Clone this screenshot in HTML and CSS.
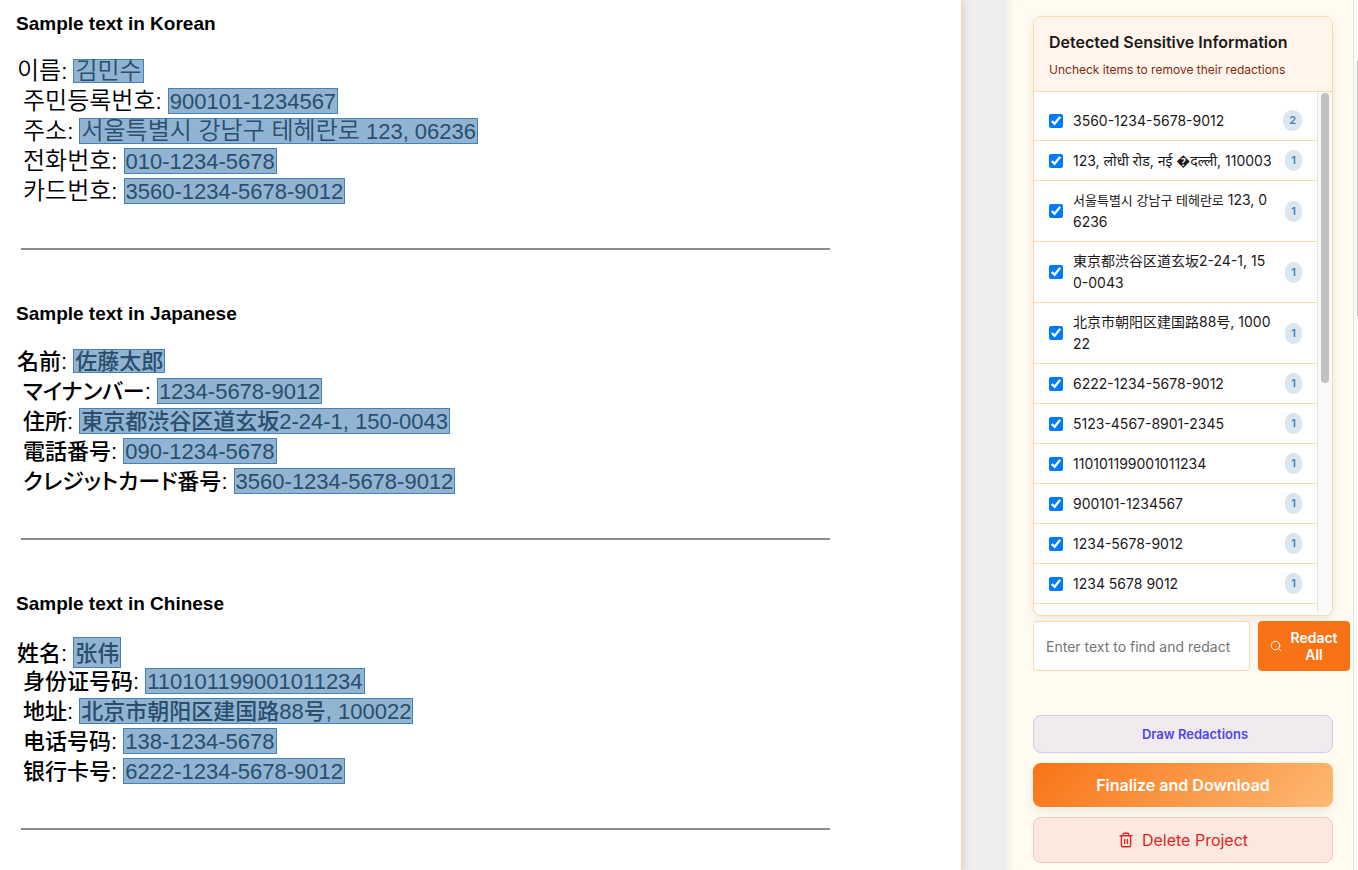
FILE: index.html
```
<!DOCTYPE html>
<html lang="en">
<head>
    <meta charset="UTF-8">
    <meta name="viewport" content="width=device-width, initial-scale=1.0">
    <title>Redaction Review</title>
    <link rel="stylesheet" href="styles.css">
</head>
<body>

    <div class="app">
        <main class="viewer">
            <div class="document-page">

                <section class="sample" lang="ko">
                    <h2>Sample text in Korean</h2>
                    <div class="line first"><span class="hangul">이름</span>: <mark class="short"><span class="hangul">김민수</span></mark></div>
                    <div class="line"><span class="hangul">주민등록번호</span>: <mark>900101-1234567</mark></div>
                    <div class="line"><span class="hangul">주소</span>: <mark><span class="hangul">서울특별시 강남구 테헤란로</span> 123, 06236</mark></div>
                    <div class="line"><span class="hangul">전화번호</span>: <mark>010-1234-5678</mark></div>
                    <div class="line"><span class="hangul">카드번호</span>: <mark>3560-1234-5678-9012</mark></div>
                    <hr>
                </section>

                <section class="sample" lang="ja">
                    <h2>Sample text in Japanese</h2>
                    <div class="line first"><span class="han">名前</span>: <mark class="short"><span class="han">佐藤太郎</span></mark></div>
                    <div class="line"><span class="han kana">マイナンバー</span>: <mark>1234-5678-9012</mark></div>
                    <div class="line"><span class="han">住所</span>: <mark><span class="han">東京都渋谷区道玄坂</span>2-24-1, 150-0043</mark></div>
                    <div class="line"><span class="han">電話番号</span>: <mark>090-1234-5678</mark></div>
                    <div class="line"><span class="han kana">クレジットカード番号</span>: <mark>3560-1234-5678-9012</mark></div>
                    <hr>
                </section>

                <section class="sample" lang="zh-CN">
                    <h2>Sample text in Chinese</h2>
                    <div class="line first"><span class="han">姓名</span>: <mark class="tall"><span class="han">张伟</span></mark></div>
                    <div class="line"><span class="han">身份证号码</span>: <mark>110101199001011234</mark></div>
                    <div class="line"><span class="han">地址</span>: <mark><span class="han">北京市朝阳区建国路</span>88<span class="han">号</span>, 100022</mark></div>
                    <div class="line"><span class="han">电话号码</span>: <mark>138-1234-5678</mark></div>
                    <div class="line"><span class="han">银行卡号</span>: <mark>6222-1234-5678-9012</mark></div>
                    <hr>
                </section>

            </div>
        </main>

        <aside class="sidebar">
            <section class="detected-card">
                <header class="card-header">
                    <h3>Detected Sensitive Information</h3>
                    <p>Uncheck items to remove their redactions</p>
                </header>
                <div class="card-body">
                    <ul class="item-list">
                        <li><label><input type="checkbox" checked><span class="item-text">3560-1234-5678-9012</span></label><span class="count">2</span></li>
                        <li><label><input type="checkbox" checked><span class="item-text">123, लोधी रोड, नई &#xFFFD;दल्ली, 110003</span></label><span class="count">1</span></li>
                        <li><label><input type="checkbox" checked><span class="item-text" lang="ko"><span class="hangul-small">서울특별시 강남구 테헤란로</span> 123, 06236</span></label><span class="count">1</span></li>
                        <li><label><input type="checkbox" checked><span class="item-text" lang="ja">東京都渋谷区道玄坂2-24-1, 150-0043</span></label><span class="count">1</span></li>
                        <li><label><input type="checkbox" checked><span class="item-text" lang="zh-CN">北京市朝阳区建国路88号, 100022</span></label><span class="count">1</span></li>
                        <li><label><input type="checkbox" checked><span class="item-text">6222-1234-5678-9012</span></label><span class="count">1</span></li>
                        <li><label><input type="checkbox" checked><span class="item-text">5123-4567-8901-2345</span></label><span class="count">1</span></li>
                        <li><label><input type="checkbox" checked><span class="item-text">110101199001011234</span></label><span class="count">1</span></li>
                        <li><label><input type="checkbox" checked><span class="item-text">900101-1234567</span></label><span class="count">1</span></li>
                        <li><label><input type="checkbox" checked><span class="item-text">1234-5678-9012</span></label><span class="count">1</span></li>
                        <li><label><input type="checkbox" checked><span class="item-text">1234 5678 9012</span></label><span class="count">1</span></li>
                    </ul>
                    <div class="list-scrollbar"><div class="list-thumb"></div></div>
                </div>
            </section>

            <form class="find-row">
                <input type="text" class="find-input" aria-label="Text to redact" placeholder="Enter text to find and redact">
                <button type="button" class="redact-button">
                    <svg width="12" height="12" viewBox="0 0 12 12" fill="none" stroke="currentColor" stroke-linecap="round">
                        <circle cx="5.5" cy="5.5" r="4.3"/>
                        <path d="M8.7 8.7l2.3 2.3"/>
                    </svg>
                    <span>Redact All</span>
                </button>
            </form>

            <div class="actions">
                <button type="button" class="draw-button">Draw Redactions</button>
                <button type="button" class="finalize-button">Finalize and Download</button>
                <button type="button" class="delete-button">
                    <svg width="16" height="16" viewBox="0 0 16 16" fill="none" stroke="currentColor" stroke-width="1.4" stroke-linecap="round" stroke-linejoin="round">
                        <path d="M2 3.7h12"/>
                        <path d="M5.2 3.5V2.2c0-.6.4-1 1-1h3.6c.6 0 1 .4 1 1v1.3"/>
                        <path d="M3.4 3.9v9.6c0 .7.5 1.2 1.2 1.2h6.8c.7 0 1.2-.5 1.2-1.2V3.9"/>
                        <path d="M6.6 7.4v4M9.4 7.4v4"/>
                    </svg>
                    Delete Project
                </button>
            </div>
        </aside>

        <div class="page-scrollbar"><div class="page-thumb"></div></div>
    </div>

</body>
</html>
```

FILE: styles.css
```
* {
    box-sizing: border-box;
}

body {
    margin: 0;
    font-family: Inter, "Noto Sans", "Noto Sans CJK SC", sans-serif;
    color: #1c1917;
    background: #fffbf0;
}

button,
input {
    font-family: inherit;
}

.app {
    display: flex;
    height: 100vh;
    overflow: hidden;
}

/* Document viewer */
.viewer {
    flex: 1;
    min-width: 0;
    padding-right: 45px;
    background: #eeeeee;
    overflow: hidden;
}

.document-page {
    min-height: 100%;
    padding-left: 16px;
    background: white;
    border-right: 1px solid #fed7aa;
    box-shadow: 0 0 10px rgba(0, 0, 0, 0.15);
    font-family: "Liberation Sans", Arial, sans-serif;
    color: black;
}

.sample {
    height: 290px;
    padding-top: 13px;
}

.sample h2 {
    margin: 0 0 22px;
    font-size: 19px;
    line-height: 22px;
    font-weight: bold;
}

.sample hr {
    height: 2px;
    margin: 41px 131px 0 5px;
    border: none;
    background: #8c8c8c;
}

.line {
    height: 30px;
    padding-left: 7px;
    font-size: 22px;
    line-height: 30px;
    white-space: nowrap;
}

.line.first {
    padding-left: 1px;
}

.han {
    font-family: "Noto Sans CJK JP", sans-serif;
    font-weight: 500;
    line-height: 0;
}

.sample:lang(zh) .han {
    font-family: "Noto Sans CJK SC", sans-serif;
}

.kana {
    font-feature-settings: "palt";
}

.hangul {
    font-family: "Noto Sans CJK KR", sans-serif;
    font-size: 24px;
    font-weight: 350;
    line-height: 0;
}

mark {
    display: inline-block;
    padding: 2px 1px 0;
    border: 1px solid #4682b4;
    background: #90b4d2;
    color: #2a4e6c;
    line-height: 22px;
}

mark.short {
    line-height: 20px;
}

mark.tall {
    line-height: 27px;
}

/* Sidebar */
.sidebar {
    flex: 0 0 346px;
    min-width: 0;
    padding: 16px 20px 0 26px;
    background: #fffbf0;
    box-shadow: inset 8px 0 8px -6px rgba(0, 0, 0, 0.06);
}

.detected-card {
    height: 600px;
    display: flex;
    flex-direction: column;
    padding-bottom: 3px;
    background: white;
    border: 1px solid #fed7aa;
    border-radius: 8px;
    box-shadow: 0 4px 12px rgba(0, 0, 0, 0.08);
    overflow: hidden;
}

.card-header {
    padding: 15px 15px 11px;
    background: #fff5ed;
    border-bottom: 1px solid #fed7aa;
}

.card-header h3 {
    margin: 0 0 8px;
    font-size: 16px;
    line-height: 20px;
    font-weight: 600;
}

.card-header p {
    margin: 0;
    font-size: 12px;
    line-height: 20px;
    color: #7c2d12;
}

.card-body {
    flex: 1;
    min-height: 0;
    display: flex;
    overflow: hidden;
}

.item-list {
    flex: 1;
    margin: 0;
    padding: 9px 0 0;
    list-style: none;
}

.item-list li {
    display: flex;
    align-items: center;
    gap: 12px;
    min-height: 40px;
    padding: 8px 15px;
    border-bottom: 1px solid #fed7aa;
}

.item-list label {
    flex: 1;
    display: flex;
    align-items: center;
    gap: 10px;
}

.item-list input {
    flex: none;
    width: 14px;
    height: 14px;
    margin: 0;
    accent-color: #007aff;
}

.item-text {
    font-size: 14px;
    line-height: 22px;
    word-break: break-all;
}

.item-text:lang(ja) {
    font-family: Inter, "Noto Sans CJK JP", sans-serif;
}

.item-text:lang(ko) {
    font-family: Inter, "Noto Sans CJK KR", sans-serif;
}

.hangul-small {
    font-size: 13px;
}

.count {
    padding: 0 6px;
    border-radius: 10px;
    background: #dae6f0;
    color: #4682b4;
    font-size: 11px;
    line-height: 21px;
    font-weight: 600;
}

.list-scrollbar {
    width: 15px;
    padding: 1px 3px;
    background: #fafafa;
    border-left: 1px solid #e5e5e5;
}

.list-thumb {
    width: 8px;
    height: 56%;
    border-radius: 4px;
    background: #c1c1c1;
}

/* Find and redact */
.find-row {
    display: flex;
    gap: 8px;
    margin: 5px -17px 44px 0;
}

.find-input {
    flex: 1;
    min-width: 0;
    height: 50px;
    padding: 0 12px;
    border: 1px solid #fed7aa;
    border-radius: 4px;
    background: white;
    font-size: 14px;
}

.find-input::placeholder {
    color: #757575;
}

.redact-button {
    display: flex;
    align-items: center;
    gap: 8px;
    width: 92px;
    padding: 0 12px;
    border: none;
    border-radius: 4px;
    background: #f97316;
    color: white;
    font-size: 14px;
    line-height: 17px;
    font-weight: 600;
}

.redact-button svg {
    flex: none;
}

.actions {
    display: flex;
    flex-direction: column;
    gap: 10px;
}

.actions button {
    border-radius: 8px;
}

.draw-button {
    height: 38px;
    padding: 0 0 0 24px;
    border: 1px solid #d0c9ee;
    background: #f1ebf0;
    color: #4f46e5;
    font-size: 13px;
    font-weight: 600;
}

.finalize-button {
    height: 44px;
    border: none;
    background: linear-gradient(135deg, #f97316, #fdba74);
    box-shadow: 0 4px 12px rgba(0, 0, 0, 0.08);
    color: white;
    font-size: 16px;
    font-weight: 600;
}

.delete-button {
    display: flex;
    align-items: center;
    justify-content: center;
    gap: 8px;
    height: 46px;
    border: 1px solid #f9c8c0;
    background: #fce8df;
    color: #dc2626;
    font-size: 16px;
}

/* Window scrollbar */
.page-scrollbar {
    flex: 0 0 5px;
    padding-top: 61px;
    background: #fafafa;
    border-left: 1px solid #e5e5e5;
}

.page-thumb {
    height: 255px;
    margin-left: 3px;
    background: #c1c1c1;
}
```
